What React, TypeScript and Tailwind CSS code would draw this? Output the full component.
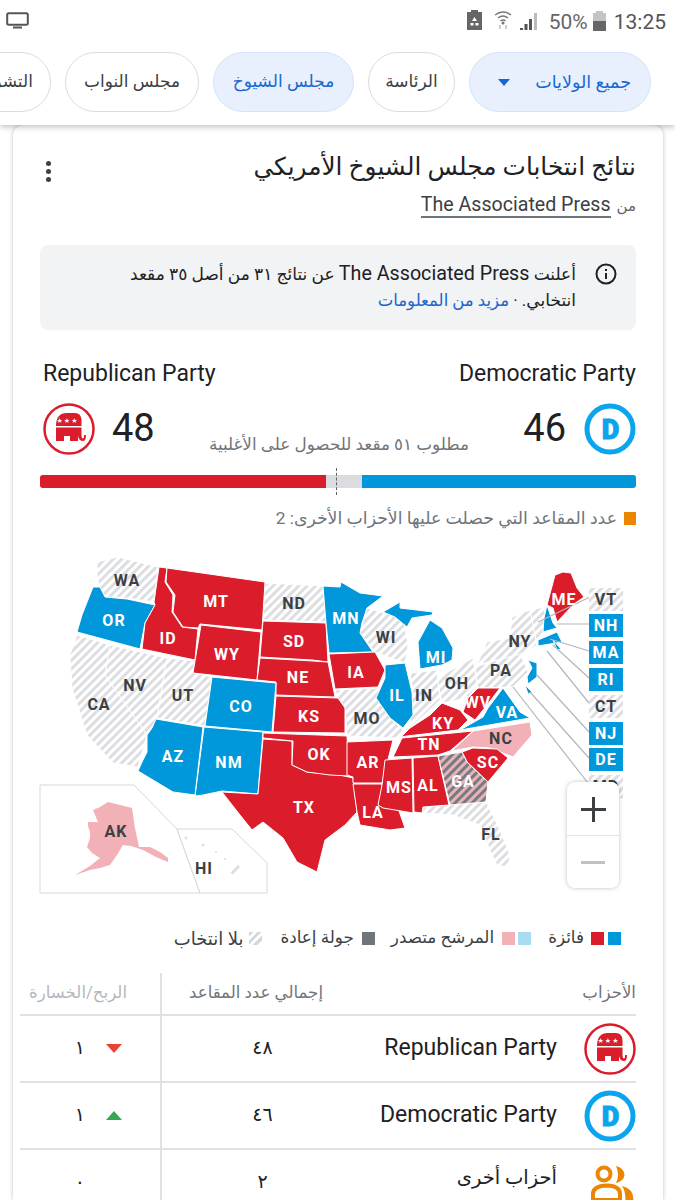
import React from 'react';

const RED = '#db1c2b';
const BLUE = '#0098da';
const PINK = '#f1b1b7';

type State = { points: string; fill: string };

const states: State[] = [
    { fill: 'url(#hatch)', points: '97,562 118,557 158,567 154,602 127,598 105,597 100,587 97,578' },
    { fill: 'url(#hatch)', points: '77,635 110,645 105,675 147,735 138,767 113,763 87,735 72,688 70,655' },
    { fill: 'url(#hatch)', points: '110,645 167,658 157,718 147,735 105,675' },
    { fill: 'url(#hatch)', points: '167,658 195,661 193,673 212,677 205,726 157,718' },
    { fill: 'url(#hatch)', points: '265,583 323,586 327,622 263,620' },
    { fill: 'url(#hatch)', points: '360,633 367,608 383,613 403,617 408,645 405,663 375,652' },
    { fill: 'url(#hatch)', points: '335,690 378,688 390,718 403,730 398,738 347,736 345,708 338,698' },
    { fill: 'url(#hatch)', points: '410,673 437,670 440,700 410,728 413,692' },
    { fill: 'url(#hatch)', points: '437,678 473,658 477,685 468,698 442,703' },
    { fill: 'url(#hatch)', points: '475,667 520,653 528,672 513,687 478,688' },
    { fill: 'url(#hatch)', points: '487,642 510,638 512,617 530,610 537,645 525,653 477,665' },
    { fill: 'url(#hatch)', points: '530,610 545,607 543,632 537,640 537,645' },
    { fill: 'url(#hatch)', points: '423,807 486,802 500,830 510,855 508,867 497,865 490,850 480,825 453,815 423,813' },
    { fill: BLUE, points: '77,632 82,615 93,587 100,587 105,597 127,599 155,605 145,623 140,649' },
    { fill: RED, points: '159,567 167,568 165,582 173,595 172,612 182,627 198,629 195,660 142,649 145,623 155,605 154,602' },
    { fill: RED, points: '167,568 265,582 262,630 200,624 198,628 183,627 173,612 175,595 166,582' },
    { fill: RED, points: '201,625 261,632 257,680 193,673' },
    { fill: RED, points: '263,621 326,623 328,662 312,660 260,657' },
    { fill: RED, points: '260,658 313,661 328,662 335,697 276,695 276,682 257,680' },
    { fill: RED, points: '276,696 338,698 345,708 345,733 273,732' },
    { fill: BLUE, points: '212,677 276,683 272,732 205,726' },
    { fill: BLUE, points: '204,727 263,732 258,794 222,791 203,795 195,796' },
    { fill: BLUE, points: '156,719 203,727 195,795 173,792 138,771 142,762 147,752 147,735 152,728' },
    { fill: RED, points: '263,739 292,741 292,765 307,772 340,775 353,778 357,812 345,825 325,840 317,872 297,862 283,838 263,822 252,830 240,815 222,792 258,794' },
    { fill: RED, points: '263,733 347,736 349,776 330,775 307,772 292,765 293,741 263,738' },
    { fill: BLUE, points: '323,586 340,587 341,582 360,593 383,596 367,608 362,623 360,633 373,652 329,653 326,623' },
    { fill: RED, points: '329,654 375,652 385,670 378,687 335,689' },
    { fill: BLUE, points: '385,665 405,663 412,692 413,715 403,728 390,718 376,698 385,678' },
    { fill: RED, points: '347,742 393,740 382,783 353,783 353,777 347,775' },
    { fill: RED, points: '353,784 382,784 382,807 398,808 405,828 390,830 360,825 357,812' },
    { fill: RED, points: '385,760 412,758 413,813 383,808 378,805 382,785' },
    { fill: RED, points: '413,758 438,756 449,805 423,807 422,813 414,812' },
    { fill: RED, points: '402,738 473,731 450,751 438,755 393,757' },
    { fill: RED, points: '401,737 410,728 430,715 442,703 460,710 468,720 458,730 407,736' },
    { fill: RED, points: '478,688 500,688 487,705 475,720 463,712 468,698' },
    { fill: BLUE, points: '503,688 520,712 530,718 460,730 483,717 488,708' },
    { fill: PINK, points: '473,731 530,722 532,735 513,757 490,748 473,747 452,751' },
    { fill: RED, points: '462,752 473,748 497,749 508,758 488,782 467,762' },
    { fill: 'url(#runoff)', points: '438,756 462,752 467,762 488,782 486,802 450,805' },
    { fill: RED, points: '555,575 563,572 571,573 577,588 584,597 574,604 557,622 553,608 547,605' },
    { fill: BLUE, points: '547,605 553,623 557,628 543,632 544,618' },
    { fill: BLUE, points: '538,640 557,632 562,642 538,646' },
    { fill: BLUE, points: '553,640 561,649 557,650' },
    { fill: BLUE, points: '528,660 537,663 537,677 528,684 527,677 532,668' },
    { fill: BLUE, points: '525,685 532,692 528,694' },
    { fill: BLUE, points: '383,612 400,602 400,608 433,612 432,615 412,618 407,627 395,617' },
    { fill: BLUE, points: '418,642 430,620 442,628 453,648 452,660 442,665 420,669' },
];

const labels: [string, number, number, boolean][] = [
    ['WA', 127, 580, false], ['OR', 114, 620, true], ['MT', 216, 601, true], ['ID', 168, 638, true],
    ['WY', 227, 654, true], ['ND', 294, 603, false], ['SD', 294, 641, true], ['NE', 298, 677, true],
    ['KS', 309, 716, true], ['CO', 241, 706, true], ['UT', 183, 695, false], ['NV', 135, 685, false],
    ['CA', 99, 704, false], ['AZ', 173, 756, true], ['NM', 229, 762, true], ['OK', 319, 754, true],
    ['TX', 304, 807, true], ['AK', 116, 831, false], ['HI', 204, 868, false], ['MN', 346, 618, true],
    ['WI', 386, 637, false], ['IA', 356, 672, true], ['MI', 436, 657, true], ['IL', 397, 695, true],
    ['IN', 424, 695, false], ['OH', 457, 683, false], ['MO', 367, 718, false], ['NY', 520, 641, false],
    ['PA', 501, 670, false], ['WV', 478, 702, true], ['VA', 507, 712, true], ['KY', 443, 723, true],
    ['TN', 429, 744, true], ['NC', 501, 738, false], ['AR', 368, 762, true], ['SC', 488, 762, true],
    ['GA', 463, 781, true], ['MS', 399, 787, true], ['AL', 428, 785, true], ['LA', 373, 812, true],
    ['FL', 491, 834, false], ['ME', 564, 599, true],
];

const sideLabels: [string, number, boolean][] = [
    ['VT', 588, false], ['NH', 614, true], ['MA', 641, true], ['RI', 668, true],
    ['CT', 695, false], ['NJ', 722, true], ['DE', 748, true], ['MD', 775, false],
];

const connectors = [
    '590,597 538,622', '590,624 557,624', '589,651 550,639', '589,678 553,645',
    '589,703 547,651', '589,732 537,675', '589,758 530,692', '588,783 513,687',
];

function RepublicanLogo() {
    return (
        <svg width="52" height="52" viewBox="0 0 52 52" className="shrink-0">
            <circle cx="26" cy="26" r="24.5" fill="#fff" stroke={RED} strokeWidth="2.5" />
            <path
                d="M13 23 Q13 10 24 10 H32 Q38 10 38.5 17 V23 Z M13 24.5 H38.5 V31 Q38.5 35.5 40 35.5 Q41 35.5 41 32 H43 Q43 38 40 38 Q36 38 35 33 V38 H27 V33 H21 V38 H13 Z"
                fill={RED}
            />
            <text x="24.5" y="19.500" textAnchor="middle" fontSize="7" fill="#fff" letterSpacing="1">
                ★★★
            </text>
        </svg>
    );
}

function DemocratLogo() {
    return (
        <svg width="52" height="52" viewBox="0 0 52 52" className="shrink-0">
            <circle cx="26" cy="26" r="23" fill="#fff" stroke="#0ca4ec" strokeWidth="5" />
            <text
                x="26.5"
                y="35.500"
                textAnchor="middle"
                fontSize="27"
                fontWeight="900"
                stroke="#0ca4ec"
                strokeWidth="1"
                fill="#0ca4ec"
                fontFamily="Roboto, sans-serif"
            >
                D
            </text>
        </svg>
    );
}

function OthersLogo() {
    return (
        <svg width="60" height="50" viewBox="0 0 60 50" className="mb-[15px] shrink-0" fill="none">
            <circle cx="24" cy="24" r="6.500" stroke="#ea8600" strokeWidth="4" />
            <path d="M13 50 V44 Q13 36 27 35.500 Q40 36 40 44 V50 Z" stroke="#ea8600" strokeWidth="4" />
            <path d="M36 16 Q44 18 44.500 25 Q44 31 36 33 Q40 25 36 16 Z" fill="#ea8600" />
            <path d="M42 36 Q53 38 53.500 50 H45.500 Q45.500 41 42 36 Z" fill="#ea8600" />
        </svg>
    );
}

function StatusBar() {
    return (
        <div dir="ltr" className="flex h-[44px] items-center justify-between pl-[6px] pr-[9px]">
            <svg width="23" height="17" viewBox="0 0 23 17" fill="none" className="mb-[4px]">
                <rect x="1.200" y="1.200" width="20.600" height="11.600" rx="1.500" stroke="#555" strokeWidth="2" />
                <rect x="7" y="14.500" width="9" height="2" fill="#555" />
            </svg>
            <div className="flex items-center">
                <svg width="15" height="20" viewBox="0 0 15 20" className="mb-[4px]">
                    <path d="M4 0h7v2h4v18H0V2h4z" fill="#666" />
                    <path d="M7.500 7l2.500 4H5zM3.500 13h3v2.500h-3zM8.500 13h3v2.500h-3z" fill="#fff" />
                </svg>
                <svg width="18" height="20" viewBox="0 0 18 20" fill="none" className="mb-[4px] ml-[12px]" stroke="#777" strokeWidth="1.500">
                    <path d="M1 5q8-6 16 0M4 8q5-4 10 0M6.500 11q2.500-2 5 0" />
                    <circle cx="9" cy="13" r="0.800" fill="#777" />
                    <path d="M6 15v4M12 15v4" stroke="#bbb" />
                </svg>
                <svg width="19" height="18" viewBox="0 0 19 18" className="mb-[2px] ml-[7px]">
                    <path d="M1 18v-2h3v2zM5.500 18v-6h3v6zM10 18V7h3v11z" fill="#555" />
                    <path d="M15 18V1h3v17z" fill="#bbb" />
                </svg>
                <span className="ml-[11px] text-[21px] leading-none text-[#666]">50%</span>
                <svg width="13" height="20" viewBox="0 0 13 20" className="mb-[2px] ml-[5px]">
                    <path d="M3 0h7v2h3v18H0V2h3z" fill="#c4c4c4" />
                    <path d="M0 10h13v10H0z" fill="#666" />
                </svg>
                <span className="ml-[8px] text-[21px] leading-none text-[#555]">13:25</span>
            </div>
        </div>
    );
}

function Chip({ label, width, active }: { label: string; width: string; active?: boolean }) {
    return (
        <div
            className={
                active
                    ? `flex h-[60px] shrink-0 items-center justify-center rounded-[30px] border border-[#d2e3fc] bg-[#e8f0fe] text-[17px] text-[#1967d2] ${width}`
                    : `flex h-[60px] shrink-0 items-center justify-center rounded-[30px] border border-[#dadce0] bg-white text-[17px] text-[#3c4043] ${width}`
            }
        >
            {label}
        </div>
    );
}

function UsMap() {
    return (
        <div className="relative h-[360px] w-full">
            <svg width="610" height="360" viewBox="30 545 610 360" className="absolute left-[17px] top-0" fontFamily="Roboto, sans-serif">
                <defs>
                    <pattern id="hatch" width="6" height="6" patternUnits="userSpaceOnUse" patternTransform="rotate(45)">
                        <rect width="6" height="6" fill="#fff" />
                        <rect width="3" height="6" fill="#dcdee1" />
                    </pattern>
                    <pattern id="runoff" width="6" height="6" patternUnits="userSpaceOnUse" patternTransform="rotate(45)">
                        <rect width="6" height="6" fill="#e7b3b8" />
                        <rect width="3" height="6" fill="#777b80" />
                    </pattern>
                </defs>
                {states.map((s) => (
                    <polygon key={s.points} points={s.points} fill={s.fill} stroke="#fff" strokeWidth="1" strokeLinejoin="round" />
                ))}
                {connectors.map((c) => (
                    <polyline key={c} points={c} stroke="#b4b6b9" strokeWidth="1.200" fill="none" />
                ))}
                <polygon points="40,785 134,785 177,829 200,893 40,893" fill="#fff" stroke="#d5d7da" strokeWidth="1" />
                <polygon points="177,829 232,829 267,863 267,893 200,893" fill="#fff" stroke="#d5d7da" strokeWidth="1" />
                <polygon
                    points="93,810 100,807 108,802 120,805 132,808 135,828 139,847 150,847 160,852 168,858 168,862 156,857 143,850 131,846 123,845 117,855 110,865 100,868 90,870 75,875 90,866 100,858 92,853 87,847 90,838 90,832 88,826 88,822 98,822"
                    fill={PINK}
                />
                <polygon points="230,872 238,864 240,867 233,875" fill="url(#hatch)" />
                <circle cx="186" cy="838" r="1.500" fill="#dcdee1" />
                <circle cx="203" cy="845" r="1.500" fill="#dcdee1" />
                <circle cx="216" cy="852" r="1" fill="#dcdee1" />
                <circle cx="225" cy="859" r="1" fill="#dcdee1" />
                {sideLabels.map(([name, y, won]) => (
                    <g key={name}>
                        <rect x="589" y={y} width="34" height="23" fill={won ? BLUE : 'url(#hatch)'} />
                        <text x="606" y={y + 17} textAnchor="middle" fontSize="16" fontWeight="700" letterSpacing="1" fill={won ? '#fff' : '#3c4043'}>
                            {name}
                        </text>
                    </g>
                ))}
                {labels.map(([name, x, y, light]) => (
                    <text key={name} x={x} y={y + 6} textAnchor="middle" fontSize="16" fontWeight="700" letterSpacing="1" fill={light ? '#fff' : '#3c4043'}>
                        {name}
                    </text>
                ))}
            </svg>
            <div className="absolute left-[554px] top-[237px] flex h-[106px] w-[52px] flex-col rounded-[8px] bg-white shadow-[0_0_4px_rgba(0,0,0,0.25)]">
                <div className="flex h-[54px] items-center justify-center border-b border-[#e2e3e5]">
                    <svg width="26" height="26" viewBox="0 0 26 26">
                        <path d="M12 1h3v11h11v3H15v11h-3V15H1v-3h11z" fill="#3c4043" />
                    </svg>
                </div>
                <div className="flex flex-1 items-center justify-center">
                    <div className="h-[3px] w-[24px] bg-[#bdc1c6]" />
                </div>
            </div>
        </div>
    );
}

function Legend() {
    return (
        <div className="mt-[26px] flex h-[14px] items-center pr-[15px] text-[16.800px] text-[#3c4043]">
            <span className="h-[13px] w-[13px] bg-[#0098da]" />
            <span className="mr-[4px] h-[13px] w-[13px] bg-[#db1c2b]" />
            <span className="mr-[7px]">فائزة</span>
            <span className="mr-[17px] h-[13px] w-[13px] bg-[#a8dcf3]" />
            <span className="mr-[3px] h-[13px] w-[13px] bg-[#f1b1b7]" />
            <span className="mr-[8px]">المرشح متصدر</span>
            <span className="mr-[16px] h-[13px] w-[13px] bg-[#70757a]" />
            <span className="mr-[8px]">جولة إعادة</span>
            <span className="mr-[18px] h-[13px] w-[13px] bg-[repeating-linear-gradient(135deg,#d5d7da_0,#d5d7da_3px,#fff_3px,#fff_6px)]" />
            <span className="mr-[6px] text-[18px]">بلا انتخاب</span>
        </div>
    );
}

function Row({ logo, name, seats, delta, arrow, arabic }: { logo: React.ReactNode; name: string; seats: string; delta: string; arrow?: 'up' | 'down'; arabic?: boolean }) {
    return (
        <div className="flex h-[67px] items-center border-b-2 border-[#e0e1e3]">
            <div className="flex w-[52px] shrink-0 justify-center">{logo}</div>
            <div className={arabic ? 'flex-1 pb-[10px] pr-[27px] text-[19.500px] text-[#202124]' : 'flex-1 pr-[27px] text-[23px] text-[#202124]'}>{name}</div>
            <div className="flex h-full w-[161px] items-center justify-center pl-[40px] text-[19px] text-[#202124]">{seats}</div>
            <div className="flex h-full w-[142px] items-center border-r-2 border-[#e0e1e3] pr-[38px]">
                <span className="flex w-[16px] justify-center">
                    {arrow === 'down' && <span className="h-0 w-0 border-x-[8px] border-t-[9px] border-x-transparent border-t-[#ea4335]" />}
                    {arrow === 'up' && <span className="h-0 w-0 border-x-[8px] border-b-[9px] border-x-transparent border-b-[#34a853]" />}
                </span>
                <span className="mr-[21px] text-[19px] text-[#202124]">{delta}</span>
            </div>
        </div>
    );
}

export default function App() {
    return (
        <div dir="rtl" className="h-[1200px] w-[675px] overflow-hidden bg-white font-['Roboto','Noto_Sans','DejaVu_Sans',sans-serif]">
            <div className="relative z-10 h-[125px] bg-white shadow-[0_2px_6px_rgba(0,0,0,0.25)]">
                <StatusBar />
                <div className="mt-[8px] flex gap-[14px] overflow-hidden pr-[24px]">
                    <div className="flex h-[60px] w-[182px] shrink-0 items-center justify-between rounded-[30px] border border-[#d2e3fc] bg-[#e8f0fe] pl-[28px] pr-[19px] text-[17.500px] text-[#1967d2]">
                        <span>جميع الولايات</span>
                        <span className="h-0 w-0 border-x-[6.500px] border-t-[7px] border-x-transparent border-t-[#1967d2]" />
                    </div>
                    <Chip label="الرئاسة" width="w-[87px]" />
                    <Chip label="مجلس الشيوخ" width="w-[141px]" active />
                    <Chip label="مجلس النواب" width="w-[134px]" />
                    <Chip label="التشريعات" width="w-[110px]" />
                </div>
            </div>
            <div className="ml-[13px] mr-[12px] h-[1075px] rounded-t-[10px] bg-white px-[27px] shadow-[0_0_4px_rgba(0,0,0,0.25)]">
                <div className="flex items-start justify-between pt-[24px]">
                    <div>
                        <div className="text-[24.750px] leading-[36px] text-[#202124]">نتائج انتخابات مجلس الشيوخ الأمريكي</div>
                        <div className="mt-[9px] flex gap-[6px] text-[15px] leading-[24px] text-[#5f6368]">
                            من <span className="border-b-2 border-[#70757a] text-[19.600px] leading-[22px] text-[#3c4043]">The Associated Press</span>
                        </div>
                    </div>
                    <div className="ml-[6px] mt-[12px] flex flex-col gap-[3px]">
                        <span className="h-[5px] w-[5px] rounded-full bg-[#3c4043]" />
                        <span className="h-[5px] w-[5px] rounded-full bg-[#3c4043]" />
                        <span className="h-[5px] w-[5px] rounded-full bg-[#3c4043]" />
                    </div>
                </div>

                <div className="mt-[27px] flex h-[85px] items-start gap-[19px] rounded-[8px] bg-[#f1f3f4] pl-[60px] pr-[19px] pt-[16px] text-[#202124]">
                    <svg width="22" height="22" viewBox="0 0 22 22" className="mt-[2px] shrink-0" fill="none">
                        <circle cx="11" cy="11" r="9.500" stroke="#202124" strokeWidth="2" />
                        <path d="M10 10h2v6h-2zM10 6h2v2h-2z" fill="#202124" />
                    </svg>
                    <div className="text-[17px] leading-[26px]">
                        أعلنت <span className="text-[19.700px]">The Associated Press</span> عن نتائج ٣١ من أصل ٣٥ مقعد انتخابي. · <span className="text-[16.500px] text-[#1a66c9]">مزيد من المعلومات</span>
                    </div>
                </div>

                <div className="mt-[30px] flex justify-between text-[23px] leading-[28px] text-[#202124]">
                    <span>Democratic Party</span>
                    <span className="ml-[3px]">Republican Party</span>
                </div>
                <div className="mt-[15px] flex h-[51px] items-center">
                    <DemocratLogo />
                    <span className="mr-[18px] text-[38px] text-[#202124]">46</span>
                    <span className="mt-[32px] flex-1 text-center text-[16.800px] text-[#70757a]">مطلوب ٥١ مقعد للحصول على الأغلبية</span>
                    <span className="ml-[17px] text-[38px] text-[#202124]">48</span>
                    <div className="ml-[3px]">
                        <RepublicanLogo />
                    </div>
                </div>
                <div className="relative mt-[21px] flex h-[13px] overflow-hidden rounded-[3px] bg-[#dadce0]">
                    <div className="h-full w-[274px] bg-[#0098da]" />
                    <div className="h-full w-[36px]" />
                    <div className="h-full flex-1 bg-[#db1c2b]" />
                </div>
                <div className="relative">
                    <div className="absolute right-[299px] top-[-20px] h-[27px] border-r border-dashed border-[#5f6368]" />
                </div>
                <div className="mt-[20px] flex items-center gap-[7px] text-[17.300px] leading-[20px] text-[#70757a]">
                    <span className="h-[13px] w-[12px] bg-[#ea8600]" />
                    عدد المقاعد التي حصلت عليها الأحزاب الأخرى: 2
                </div>

                <div className="mx-[-27px] mt-[17px]">
                    <UsMap />
                </div>

                <Legend />

                <div className="ml-[-20px]">
                    <div className="mt-[28px] flex h-[43px] items-center border-b-2 border-[#e0e1e3] text-[16.600px] text-[#70757a]">
                        <span className="flex-1">الأحزاب</span>
                        <span className="w-[161px]">إجمالي عدد المقاعد</span>
                        <span className="flex h-full w-[142px] items-center border-r-2 border-[#e0e1e3] pr-[33px] text-[#b5b7ba]">الربح/الخسارة</span>
                    </div>
                    <Row logo={<RepublicanLogo />} name="Republican Party" seats="٤٨" delta="١" arrow="down" />
                    <Row logo={<DemocratLogo />} name="Democratic Party" seats="٤٦" delta="١" arrow="up" />
                    <Row logo={<OthersLogo />} name="أحزاب أخرى" seats="٢" delta="٠" arabic />
                </div>
            </div>
        </div>
    );
}
